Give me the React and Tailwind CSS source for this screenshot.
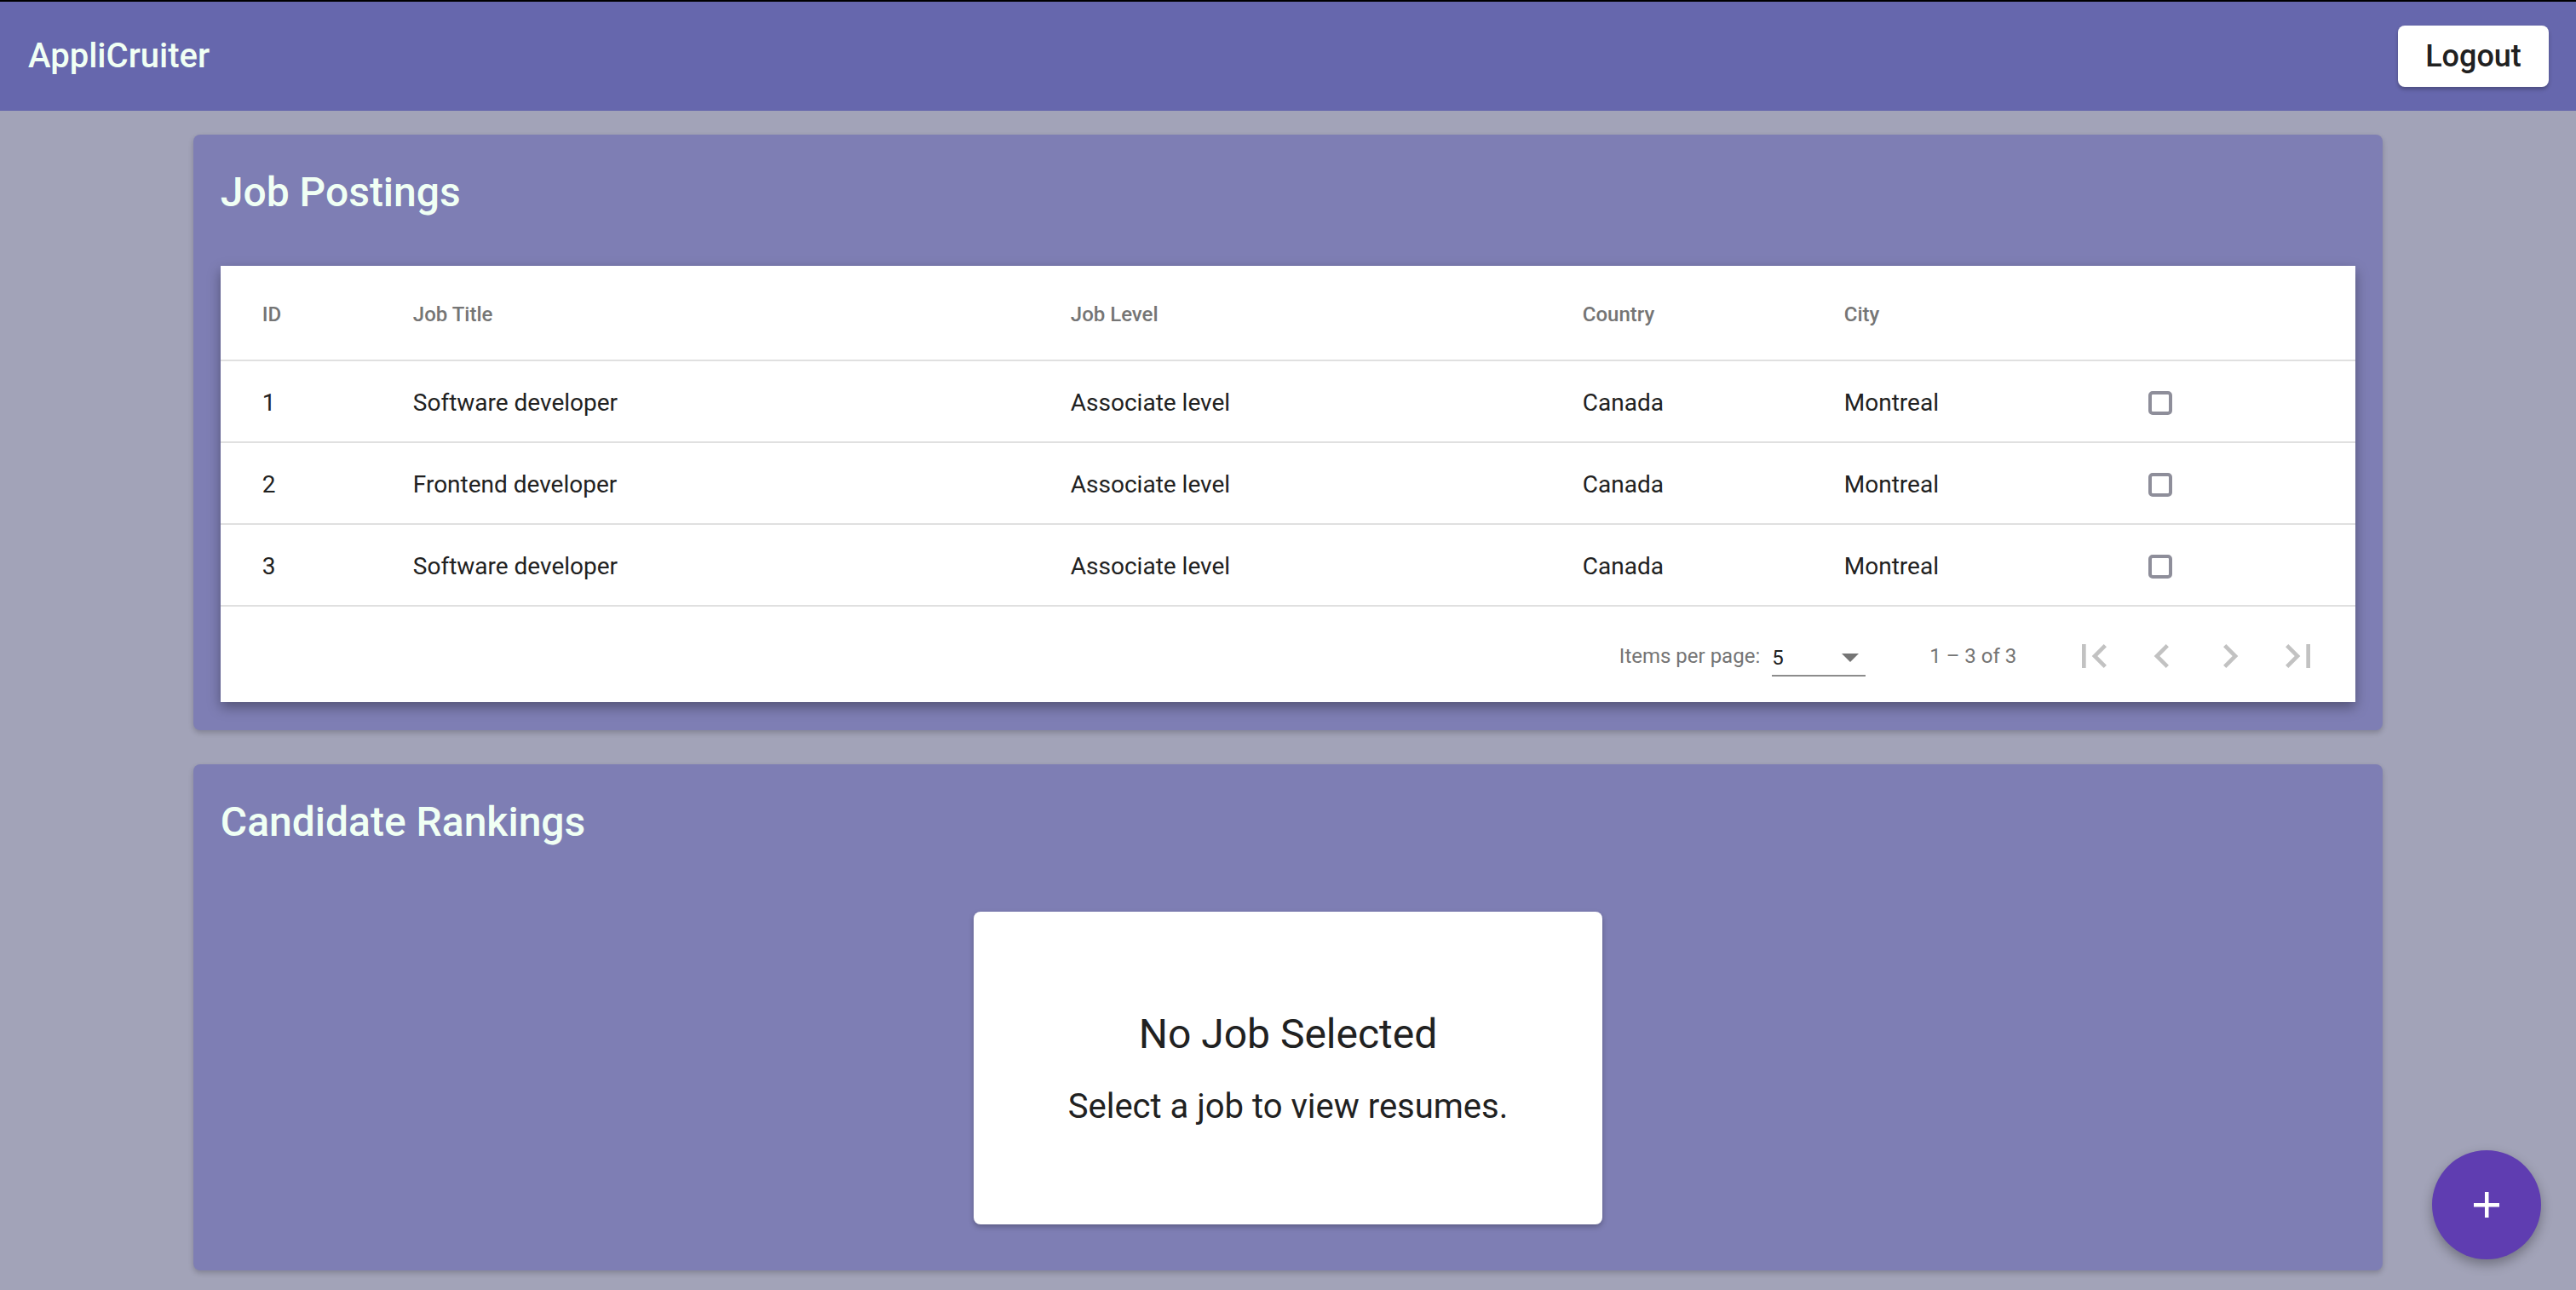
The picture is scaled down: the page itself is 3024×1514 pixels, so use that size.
import React from "react";

const rows = [
  { id: 1, title: "Software developer", level: "Associate level", country: "Canada", city: "Montreal" },
  { id: 2, title: "Frontend developer", level: "Associate level", country: "Canada", city: "Montreal" },
  { id: 3, title: "Software developer", level: "Associate level", country: "Canada", city: "Montreal" },
];

const Icon = ({ d }) => (
  <svg width="56" height="56" viewBox="0 0 24 24" fill="#c2c2c2">
    <path d={d} />
  </svg>
);

export default function App() {
  return (
    <div
      className="relative w-full h-[1514px] overflow-hidden bg-[#a2a3b8] border-t-2 border-black"
      style={{ fontFamily: "Roboto, 'Noto Sans', sans-serif" }}
    >
      {/* Toolbar */}
      <header className="h-[128px] bg-[#6667ad] flex items-center justify-between pl-[33px] pr-[32px]">
        <span className="text-[40px] font-medium text-[#f0fff4]">AppliCruiter</span>
        <button className="h-[72px] w-[177px] bg-white rounded-[8px] text-[36px] font-medium text-[#212121] shadow-[0_3px_4px_rgba(0,0,0,0.25)]">
          Logout
        </button>
      </header>

      <main className="pt-[28px]">
        {/* Job Postings card */}
        <section className="w-[85%] mx-auto bg-[#7e7eb4] rounded-[8px] px-[32px] pt-[32px] pb-[33px] shadow-[0_3px_6px_rgba(0,0,0,0.2)]">
          <h2 className="text-[48px] leading-[72px] font-medium text-[#f0fff4]">Job Postings</h2>
          <div className="mt-[50px] bg-white shadow-[0_6px_14px_rgba(0,0,0,0.35)]">
            <div className="grid grid-cols-[177px_772px_601px_307px_357px_1fr] pl-[49px] pt-[3px] h-[112px] items-center border-b-2 border-[#e0e0e0] text-[24px] font-medium text-[#757575]">
              <span>ID</span>
              <span>Job Title</span>
              <span>Job Level</span>
              <span>Country</span>
              <span>City</span>
              <span></span>
            </div>
            {rows.map((r) => (
              <div
                key={r.id}
                className="grid grid-cols-[177px_772px_601px_307px_357px_1fr] pl-[49px] pt-[3px] h-[96px] items-center border-b-2 border-[#e0e0e0] text-[28px] text-[#212121]"
              >
                <span>{r.id}</span>
                <span>{r.title}</span>
                <span>{r.level}</span>
                <span>{r.country}</span>
                <span>{r.city}</span>
                <span className="block w-[28px] h-[28px] border-[4px] border-[#8e8e9a] rounded-[5px]"></span>
              </div>
            ))}
            {/* Paginator */}
            <div className="h-[112px] flex items-center justify-end pr-[27px] pt-[4px] text-[24px] text-[#757575] whitespace-nowrap">
              <span>Items per page:</span>
              <div className="ml-[14px] w-[110px] h-[48px] border-b-2 border-[#8c8c8c] flex items-center justify-between pt-[6px]">
                <span className="text-[#212121]">5</span>
                <span className="w-0 h-0 border-l-[10px] border-r-[10px] border-t-[10px] border-l-transparent border-r-transparent border-t-[#757575] mr-[8px]"></span>
              </div>
              <span className="ml-[75px] w-[100px] whitespace-nowrap">1 – 3 of 3</span>
              <div className="ml-[53px] flex">
                <span className="w-[80px] h-[80px] flex items-center justify-center">
                  <Icon d="M18.41 16.59L13.82 12l4.59-4.59L17 6l-6 6 6 6zM6 6h2v12H6z" />
                </span>
                <span className="w-[80px] h-[80px] flex items-center justify-center">
                  <Icon d="M15.41 7.41L14 6l-6 6 6 6 1.41-1.41L10.83 12z" />
                </span>
                <span className="w-[80px] h-[80px] flex items-center justify-center">
                  <Icon d="M10 6L8.59 7.41 13.17 12l-4.58 4.59L10 18l6-6z" />
                </span>
                <span className="w-[80px] h-[80px] flex items-center justify-center">
                  <Icon d="M5.59 7.41L10.18 12l-4.59 4.59L7 18l6-6-6-6zM16 6h2v12h-2z" />
                </span>
              </div>
            </div>
          </div>
        </section>

        {/* Candidate Rankings card */}
        <section className="mt-[40px] w-[85%] mx-auto bg-[#7e7eb4] rounded-[8px] px-[32px] pt-[32px] pb-[54px] shadow-[0_3px_6px_rgba(0,0,0,0.2)]">
          <h2 className="text-[48px] leading-[72px] font-medium text-[#f0fff4]">Candidate Rankings</h2>
          <div className="mt-[69px] mx-auto w-[738px] h-[367px] bg-white rounded-[8px] shadow-[0_3px_6px_rgba(0,0,0,0.25)] flex flex-col items-center justify-center">
            <div className="text-[48px] leading-[60px] text-[#212121]">No Job Selected</div>
            <div className="mt-[30px] text-[40px] leading-[50px] text-[#212121]">Select a job to view resumes.</div>
          </div>
        </section>
      </main>

      {/* FAB */}
      <button className="absolute right-[41px] bottom-[36px] w-[128px] h-[128px] rounded-full bg-[#5f3db1] flex items-center justify-center shadow-[0_6px_14px_rgba(0,0,0,0.3)]">
        <svg width="30" height="30" viewBox="0 0 30 30">
          <rect x="13" y="0" width="4.5" height="30" fill="white" />
          <rect x="0" y="13" width="30" height="4.5" fill="white" />
        </svg>
      </button>
    </div>
  );
}
